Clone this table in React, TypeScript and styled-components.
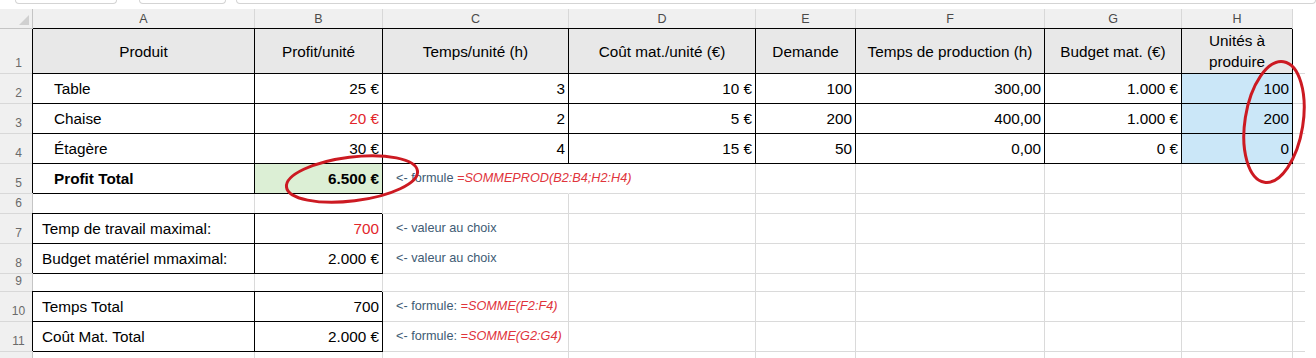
import React from 'react'
import styled, { createGlobalStyle, css } from 'styled-components'

const GRID = '#dadada'
const HEAD_LINE = '#c4c4c4'
const RED = '#e2262b'

type Align = 'left' | 'center' | 'right'
type Fill = 'head' | 'green' | 'blue'

type CellDef = {
  text?: React.ReactNode
  align?: Align
  indent?: number
  boxed?: boolean
  fill?: Fill
  bold?: boolean
  red?: boolean
  open?: boolean
  wrap?: boolean
}

const fills: Record<Fill, string> = {
  head: '#e8e8e8',
  green: '#dcefd5',
  blue: '#cbe7f8',
}

const GlobalStyle = createGlobalStyle`
  html, body {
    margin: 0;
    padding: 0;
    background: #fff;
  }
`

const Note = styled.span`
  font-size: 12.7px;
  color: #3e5b74;
  white-space: pre;
`

const Formula = styled.span`
  color: #e0343c;
  font-style: italic;
`

const head = (text: string): CellDef => ({ text, align: 'center', boxed: true, fill: 'head', wrap: true })
const value = (text: string, extra: Partial<CellDef> = {}): CellDef => ({ text, align: 'right', boxed: true, ...extra })
const label = (text: string, indent: number, extra: Partial<CellDef> = {}): CellDef => ({
  text,
  align: 'left',
  indent,
  boxed: true,
  ...extra,
})
const blank: CellDef = {}
const empty = (n: number) => Array.from({ length: n }, () => blank)

const note = (lead: string, formula?: string, open = false): CellDef => ({
  text: (
    <Note>
      {lead}
      {formula && <Formula>{formula}</Formula>}
    </Note>
  ),
  align: 'left',
  indent: 13,
  open,
})

const ROWS: CellDef[][] = [
  [
    head('Produit'),
    head('Profit/unité'),
    head('Temps/unité (h)'),
    head('Coût mat./unité (€)'),
    head('Demande'),
    head('Temps de production (h)'),
    head('Budget mat. (€)'),
    head('Unités à produire'),
  ],
  [
    label('Table', 21),
    value('25 €'),
    value('3'),
    value('10 €'),
    value('100'),
    value('300,00'),
    value('1.000 €'),
    value('100', { fill: 'blue' }),
  ],
  [
    label('Chaise', 21),
    value('20 €', { red: true }),
    value('2'),
    value('5 €'),
    value('200'),
    value('400,00'),
    value('1.000 €'),
    value('200', { fill: 'blue' }),
  ],
  [
    label('Étagère', 21),
    value('30 €'),
    value('4'),
    value('15 €'),
    value('50'),
    value('0,00'),
    value('0 €'),
    value('0', { fill: 'blue' }),
  ],
  [
    label('Profit Total', 21, { bold: true }),
    value('6.500 €', { bold: true, fill: 'green' }),
    note('<- formule ', '=SOMMEPROD(B2:B4;H2:H4)', true),
    ...empty(5),
  ],
  empty(8),
  [label('Temp de travail maximal:', 9), value('700', { red: true }), note('<- valeur au choix'), ...empty(5)],
  [label('Budget matériel mmaximal:', 9), value('2.000 €'), note('<- valeur au choix'), ...empty(5)],
  empty(8),
  [label('Temps Total', 9), value('700'), note('<- formule: ', '=SOMME(F2:F4)'), ...empty(5)],
  [label('Coût Mat. Total', 9), value('2.000 €'), note('<- formule: ', '=SOMME(G2:G4)'), ...empty(5)],
  empty(8),
]

// the last row is cut by the window, its number is not visible
const VISIBLE_ROWS = 11

const COLUMNS = ['A', 'B', 'C', 'D', 'E', 'F', 'G', 'H']

export default function App() {
  return (
    <>
      <GlobalStyle />
      <Page>
        <Ribbon>
          <FieldEdge $w={100} />
          <FieldEdge $w={85} $gap={22} />
          <FieldEdge $gap={10} />
        </Ribbon>
        <Sheet>
          <Corner />
          {COLUMNS.map((c) => (
            <ColHead key={c}>{c}</ColHead>
          ))}
          <Tail $top />
          {ROWS.map((row, r) => (
            <React.Fragment key={r}>
              <RowHead>{r < VISIBLE_ROWS ? r + 1 : null}</RowHead>
              {row.map((c, i) => (
                <Cell
                  key={i}
                  $align={c.align ?? 'left'}
                  $indent={c.indent ?? 3}
                  $boxed={!!c.boxed}
                  $fill={c.fill}
                  $bold={!!c.bold}
                  $red={!!c.red}
                  $open={!!c.open}
                  $wrap={!!c.wrap}
                >
                  {c.text}
                </Cell>
              ))}
              <Tail />
            </React.Fragment>
          ))}
        </Sheet>
        <Marks width="1316" height="358" viewBox="0 0 1316 358">
          <ellipse cx="352" cy="179" rx="66" ry="22" transform="rotate(-7 352 179)" />
          <ellipse cx="1274" cy="122" rx="29" ry="61" transform="rotate(9 1274 122)" />
        </Marks>
      </Page>
    </>
  )
}

const Page = styled.div`
  position: relative;
  width: 1316px;
  height: 358px;
  overflow: hidden;
  background: #fff;
`

const Ribbon = styled.div`
  display: flex;
  height: 9px;
  padding-left: 15px;
`

const FieldEdge = styled.div<{ $w?: number; $gap?: number }>`
  flex: ${({ $w }) => ($w ? `0 0 ${$w}px` : '1')};
  margin-left: ${({ $gap }) => $gap ?? 0}px;
  height: 3px;
  border: 1px solid #d4d4d4;
  border-top: none;
  border-radius: 0 0 4px 4px;
`

const Sheet = styled.div`
  display: grid;
  grid-template-columns: 33px 222px 128px 186px 187px 100px 189px 137px 111px 12px;
  grid-template-rows: 20px 45px repeat(4, 30px) 20px 30px 30px 18px 30px 30px 30px;
  font-family: 'Liberation Sans', Arial, sans-serif;
  font-size: 15.3px;
  color: #000;
`

const Corner = styled.div`
  position: relative;
  background: #f0f0f0;
  border-right: 1px solid ${HEAD_LINE};
  border-bottom: 1px solid ${HEAD_LINE};
  &::after {
    content: '';
    position: absolute;
    right: 3px;
    bottom: 3px;
    border-left: 10px solid transparent;
    border-bottom: 10px solid #d0d0d0;
  }
`

const ColHead = styled.div`
  display: flex;
  align-items: center;
  justify-content: center;
  background: #f0f0f0;
  border-right: 1px solid #d8d8d8;
  border-bottom: 1px solid ${HEAD_LINE};
  color: #4a4a4a;
  font-size: 12.5px;
`

const RowHead = styled.div`
  display: flex;
  align-items: flex-end;
  justify-content: center;
  padding: 0 0 3px 5px;
  background: #f0f0f0;
  border-right: 1px solid ${HEAD_LINE};
  border-bottom: 1px solid #d8d8d8;
  color: #6a6a6a;
  font-size: 12px;
  line-height: 14px;
`

const Tail = styled.div<{ $top?: boolean }>`
  border-bottom: 1px solid ${({ $top }) => ($top ? 'transparent' : GRID)};
`

const justify: Record<Align, string> = {
  left: 'flex-start',
  center: 'center',
  right: 'flex-end',
}

const Cell = styled.div<{
  $align: Align
  $indent: number
  $boxed: boolean
  $fill?: Fill
  $bold: boolean
  $red: boolean
  $open: boolean
  $wrap: boolean
}>`
  display: flex;
  align-items: center;
  justify-content: ${({ $align }) => justify[$align]};
  text-align: ${({ $align }) => $align};
  padding: 0 3px 0 ${({ $indent }) => $indent}px;
  min-width: 0;
  line-height: 21px;
  white-space: ${({ $wrap }) => ($wrap ? 'normal' : 'nowrap')};
  background: ${({ $fill }) => ($fill ? fills[$fill] : 'transparent')};
  color: ${({ $red }) => ($red ? RED : '#000')};
  font-weight: ${({ $bold }) => ($bold ? 700 : 400)};
  border-right: 1px solid ${({ $boxed, $open }) => ($boxed ? '#000' : $open ? 'transparent' : GRID)};
  border-bottom: 1px solid ${({ $boxed }) => ($boxed ? '#000' : GRID)};
  ${({ $boxed }) =>
    $boxed &&
    css`
      box-shadow: -1px -1px 0 #000;
    `}
`

const Marks = styled.svg`
  position: absolute;
  left: 0;
  top: 0;
  pointer-events: none;
  fill: none;
  stroke: #cc1a22;
  stroke-width: 3;
`
